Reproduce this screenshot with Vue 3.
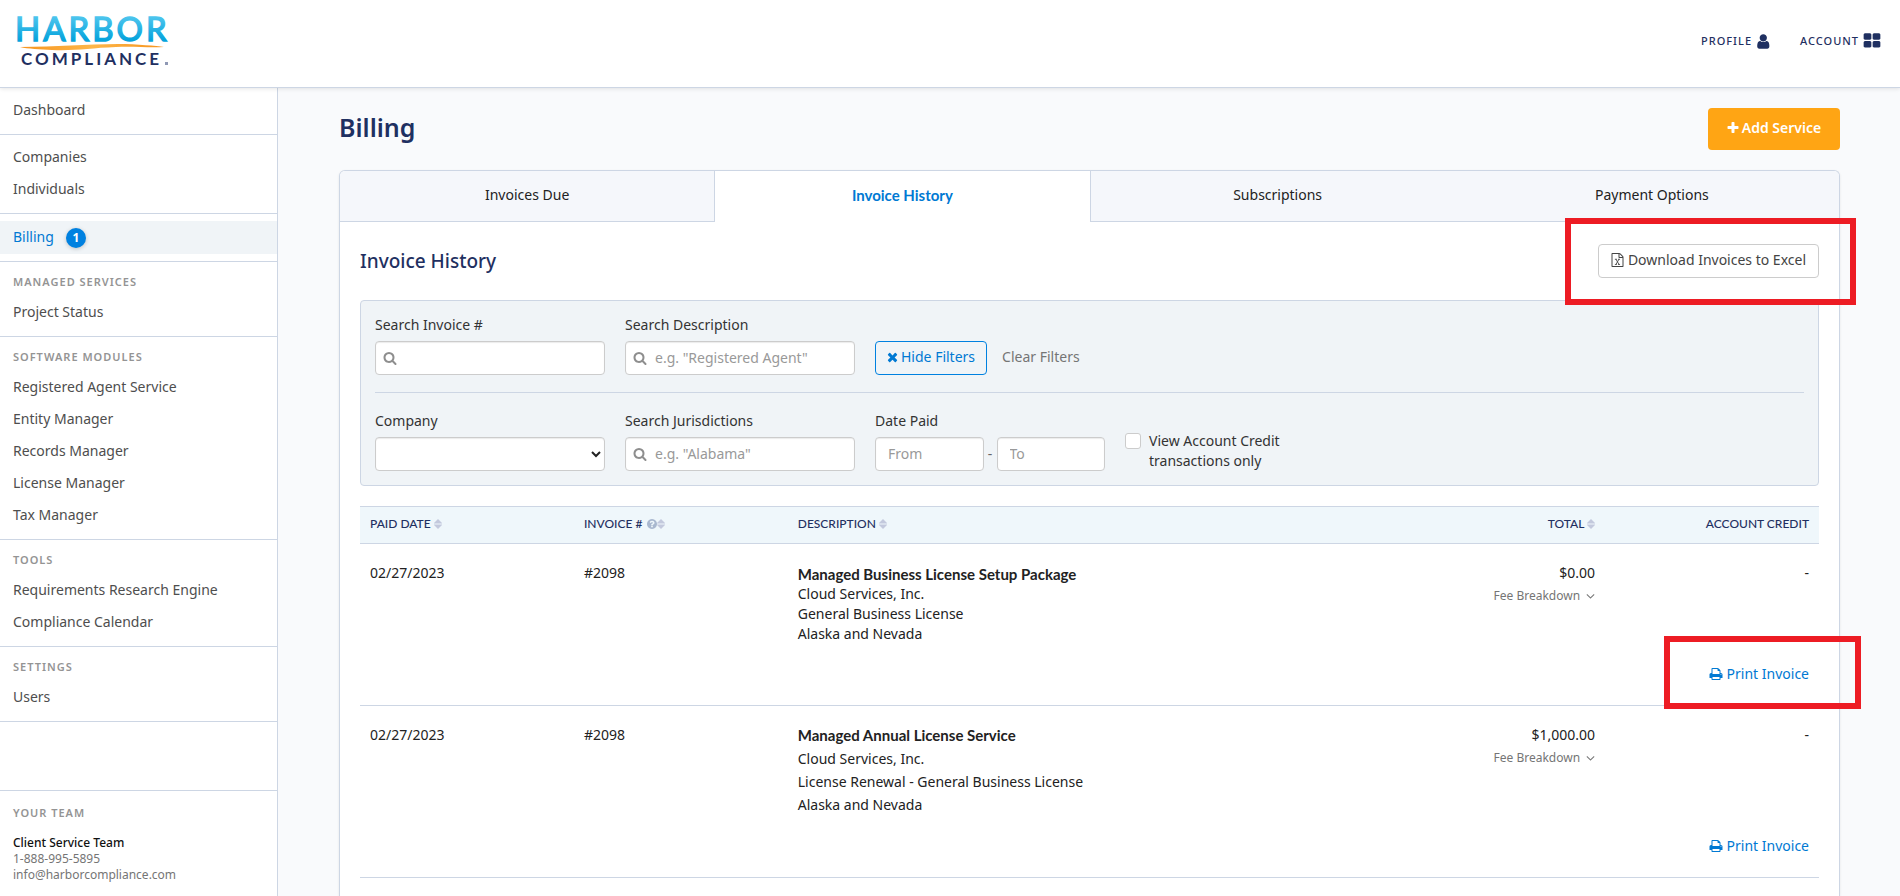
<script setup>
import { ref } from 'vue'

const icons = {
  user: 'M1536 1399q0 109-62.5 187t-150.5 78h-854q-88 0-150.5-78t-62.5-187q0-85 8.5-160.5t31.5-152 58.5-131 94-89 134.5-34.5q131 128 313 128t313-128q76 0 134.5 34.5t94 89 58.5 131 31.5 152 8.5 160.5zm-256-887q0 159-112.5 271.5t-271.5 112.5-271.5-112.5-112.5-271.5 112.5-271.5 271.5-112.5 271.5 112.5 112.5 271.5z',
  grid: 'M832 1024v384q0 52-38 90t-90 38h-512q-52 0-90-38t-38-90v-384q0-52 38-90t90-38h512q52 0 90 38t38 90zm0-768v384q0 52-38 90t-90 38h-512q-52 0-90-38t-38-90v-384q0-52 38-90t90-38h512q52 0 90 38t38 90zm896 768v384q0 52-38 90t-90 38h-512q-52 0-90-38t-38-90v-384q0-52 38-90t90-38h512q52 0 90 38t38 90zm0-768v384q0 52-38 90t-90 38h-512q-52 0-90-38t-38-90v-384q0-52 38-90t90-38h512q52 0 90 38t38 90z',
  plus: 'M1600 736v192q0 40-28 68t-68 28h-416v416q0 40-28 68t-68 28h-192q-40 0-68-28t-28-68v-416h-416q-40 0-68-28t-28-68v-192q0-40 28-68t68-28h416v-416q0-40 28-68t68-28h192q40 0 68 28t28 68v416h416q40 0 68 28t28 68z',
  search: 'M1216 832q0-185-131.5-316.5t-316.5-131.5-316.5 131.5-131.5 316.5 131.5 316.5 316.5 131.5 316.5-131.5 131.5-316.5zm512 832q0 52-38 90t-90 38q-54 0-90-38l-343-342q-179 124-399 124-143 0-273.5-55.5t-225-150-150-225-55.5-273.5 55.5-273.5 150-225 225-150 273.5-55.5 273.5 55.5 225 150 150 225 55.5 273.5q0 220-124 399l343 343q37 37 37 90z',
  times: 'M1490 1322q0 40-28 68l-136 136q-28 28-68 28t-68-28l-294-294-294 294q-28 28-68 28t-68-28l-136-136q-28-28-28-68t28-68l294-294-294-294q-28-28-28-68t28-68l136-136q28-28 68-28t68 28l294 294 294-294q28-28 68-28t68 28l136 136q28 28 28 68t-28 68l-294 294 294 294q28 28 28 68z',
  question: 'M1024 1376v-192q0-14-9-23t-23-9h-192q-14 0-23 9t-9 23v192q0 14 9 23t23 9h192q14 0 23-9t9-23zm256-672q0-88-55.5-163t-138.5-116-170-41q-243 0-371 213-15 24 8 42l132 100q7 6 19 6 16 0 25-12 53-68 86-92 34-24 86-24 48 0 85.5 26t37.5 59q0 38-20 61t-68 45q-63 28-115.5 86.5t-52.5 125.5v36q0 14 9 23t23 9h192q14 0 23-9t9-23q0-19 21.5-49.5t54.5-49.5q32-18 49-28.5t46-35 44.5-48 28-60.5 12.5-81zm384 192q0 209-103 385.5t-279.5 279.5-385.5 103-385.5-103-279.5-279.5-103-385.5 103-385.5 279.5-279.5 385.5-103 385.5 103 279.5 279.5 103 385.5z',
  print: 'M448 1536h896v-256h-896v256zm0-640h896v-384h-160q-40 0-68-28t-28-68v-160h-640v640zm1152 64q0-26-19-45t-45-19-45 19-19 45 19 45 45 19 45-19 19-45zm128 0v416q0 13-9.5 22.5t-22.5 9.5h-224v160q0 40-28 68t-68 28h-960q-40 0-68-28t-28-68v-160h-224q-13 0-22.5-9.5t-9.5-22.5v-416q0-79 56.5-135.5t135.5-56.5h64v-544q0-40 28-68t68-28h672q40 0 88 20t76 48l152 152q28 28 48 76t20 88v256h64q79 0 135.5 56.5t56.5 135.5z',
  file: 'M1596 380q28 28 48 76t20 88v1152q0 40-28 68t-68 28h-1344q-40 0-68-28t-28-68v-1600q0-40 28-68t68-28h896q40 0 88 20t76 48zm-444-244v376h376q-10-29-22-41l-313-313q-12-12-41-22zm384 1528v-1024h-416q-40 0-68-28t-28-68v-416h-768v1536h1280z',
  down: 'M1395 736q0 13-10 23l-466 466q-10 10-23 10t-23-10l-466-466q-10-10-10-23t10-23l50-50q10-10 23-10t23 10l393 393 393-393q10-10 23-10t23 10l50 50q10 10 10 23z',
  sort: 'M4 0L8 4V4.6H0V4ZM0 5.4H8V6L4 10L0 6Z'
}

const groups = [
  { items: ['Dashboard'] },
  { items: ['Companies', 'Individuals'] },
  { items: ['Billing'] },
  { title: 'Managed Services', items: ['Project Status'] },
  {
    title: 'Software Modules',
    items: ['Registered Agent Service', 'Entity Manager', 'Records Manager', 'License Manager', 'Tax Manager']
  },
  { title: 'Tools', items: ['Requirements Research Engine', 'Compliance Calendar'] },
  { title: 'Settings', items: ['Users'] }
]

const tabs = ['Invoices Due', 'Invoice History', 'Subscriptions', 'Payment Options']
const activeTab = ref('Invoice History')

const invoices = [
  {
    date: '02/27/2023',
    number: '#2098',
    title: 'Managed Business License Setup Package',
    lines: ['Cloud Services, Inc.', 'General Business License', 'Alaska and Nevada'],
    total: '$0.00',
    credit: '-',
    compact: true,
    marked: true
  },
  {
    date: '02/27/2023',
    number: '#2098',
    title: 'Managed Annual License Service',
    lines: ['Cloud Services, Inc.', 'License Renewal - General Business License', 'Alaska and Nevada'],
    total: '$1,000.00',
    credit: '-',
    compact: false,
    marked: false
  }
]
</script>

<template>
  <div class="page">
    <header class="topbar">
      <a href="#" class="logo" aria-label="Harbor Compliance">
        <svg width="170" height="66" viewBox="0 0 170 66">
          <defs>
            <linearGradient id="sky" x1="0" y1="0" x2="0" y2="1">
              <stop offset="0.2" stop-color="#4fc6ee" />
              <stop offset="0.8" stop-color="#06a3dc" />
            </linearGradient>
            <linearGradient id="sun" x1="0" y1="0" x2="1" y2="0">
              <stop offset="0" stop-color="#f7941d" />
              <stop offset="0.5" stop-color="#fdb64a" />
              <stop offset="1" stop-color="#f7941d" />
            </linearGradient>
          </defs>
          <text class="logo-top" x="5" y="33" fill="url(#sky)" stroke="url(#sky)">HARBOR</text>
          <path d="M10 39C46 39 76 36 108 36C128 36 146 38 154 39C138 40 124 38 106 39C80 40 66 43 42 42C30 41 18 41 10 39Z" fill="url(#sun)" />
          <text class="logo-bottom" x="11" y="57">COMPLIANCE</text>
          <rect x="155" y="54" width="3" height="3" fill="#8f98b4" />
        </svg>
      </a>
      <nav class="topnav">
        <a href="#">Profile
          <svg width="17" height="17" viewBox="128 0 1792 1792"><path :d="icons.user" /></svg>
        </a>
        <a href="#">Account
          <svg width="18" height="18" viewBox="0 0 1792 1792"><path :d="icons.grid" /></svg>
        </a>
      </nav>
    </header>

    <div class="body">
      <aside class="sidebar">
        <nav>
          <section v-for="(group, i) in groups" :key="i" class="group">
            <h2 v-if="group.title" class="caption">{{ group.title }}</h2>
            <a v-for="item in group.items" :key="item" href="#" class="item" :class="{ active: item === 'Billing' }">
              {{ item }}<span v-if="item === 'Billing'" class="badge">1</span>
            </a>
          </section>
        </nav>
        <section class="team">
          <h2 class="caption">Your Team</h2>
          <strong>Client Service Team</strong>
          <span>1-888-995-5895</span>
          <a href="#">info@harborcompliance.com</a>
        </section>
      </aside>

      <main class="main">
        <div class="title-row">
          <h1>Billing</h1>
          <button type="button" class="add">
            <svg width="12" height="14" viewBox="128 0 1536 1792"><path :d="icons.plus" /></svg>
            Add Service
          </button>
        </div>

        <div class="card">
          <div class="tabs" role="tablist">
            <button
              v-for="tab in tabs"
              :key="tab"
              type="button"
              role="tab"
              class="tab"
              :class="{ selected: tab === activeTab }"
              :aria-selected="tab === activeTab"
              @click="activeTab = tab"
            >{{ tab }}</button>
          </div>

          <div class="panel">
            <div class="panel-head">
              <h2>Invoice History</h2>
              <div class="anchor">
                <button type="button" class="button">
                  <svg width="13" height="14" viewBox="64 0 1664 1792">
                    <path :d="icons.file" />
                    <path class="excel" d="M560 800h260M960 800h260M560 1460h260M960 1460h260M700 800L1080 1460M1080 800L700 1460" />
                  </svg>
                  Download Invoices to Excel
                </button>
                <span class="marker marker-download"></span>
              </div>
            </div>

            <form class="filters" @submit.prevent>
              <div class="filter-row">
                <div class="field">
                  <label for="invoice">Search Invoice #</label>
                  <div class="search">
                    <svg width="14" height="14" viewBox="0 0 1792 1792"><path :d="icons.search" /></svg>
                    <input id="invoice" type="text" />
                  </div>
                </div>
                <div class="field">
                  <label for="description">Search Description</label>
                  <div class="search">
                    <svg width="14" height="14" viewBox="0 0 1792 1792"><path :d="icons.search" /></svg>
                    <input id="description" type="text" placeholder='e.g. "Registered Agent"' />
                  </div>
                </div>
                <div class="actions">
                  <button type="button" class="button hide">
                    <svg width="11" height="14" viewBox="192 0 1408 1792"><path :d="icons.times" /></svg>
                    Hide Filters
                  </button>
                  <button type="button" class="clear">Clear Filters</button>
                </div>
              </div>
              <div class="filter-row second">
                <div class="field">
                  <label for="company">Company</label>
                  <select id="company"><option></option></select>
                </div>
                <div class="field">
                  <label for="jurisdictions">Search Jurisdictions</label>
                  <div class="search">
                    <svg width="14" height="14" viewBox="0 0 1792 1792"><path :d="icons.search" /></svg>
                    <input id="jurisdictions" type="text" placeholder='e.g. "Alabama"' />
                  </div>
                </div>
                <div class="field">
                  <label for="from">Date Paid</label>
                  <div class="dates">
                    <input id="from" type="text" placeholder="From" />
                    <span>-</span>
                    <input type="text" placeholder="To" aria-label="Date paid to" />
                  </div>
                </div>
                <label class="check">
                  <input type="checkbox" />
                  <span>View Account Credit transactions only</span>
                </label>
              </div>
            </form>

            <table>
              <colgroup>
                <col class="narrow" />
                <col class="narrow" />
                <col />
                <col class="narrow" />
                <col class="narrow" />
              </colgroup>
              <thead>
                <tr>
                  <th>Paid Date <svg class="sort" width="8" height="10" viewBox="0 0 8 10"><path :d="icons.sort" /></svg></th>
                  <th>Invoice #
                    <svg class="help" width="10" height="10" viewBox="128 128 1536 1536"><path :d="icons.question" /></svg>
                    <svg class="sort" width="8" height="10" viewBox="0 0 8 10"><path :d="icons.sort" /></svg></th>
                  <th>Description <svg class="sort" width="8" height="10" viewBox="0 0 8 10"><path :d="icons.sort" /></svg></th>
                  <th class="right">Total <svg class="sort" width="8" height="10" viewBox="0 0 8 10"><path :d="icons.sort" /></svg></th>
                  <th class="right">Account Credit</th>
                </tr>
              </thead>
              <tbody v-for="(invoice, i) in invoices" :key="i">
                <tr>
                  <td>{{ invoice.date }}</td>
                  <td>{{ invoice.number }}</td>
                  <td class="details" :class="{ compact: invoice.compact }">
                    <strong>{{ invoice.title }}</strong>
                    <div v-for="line in invoice.lines" :key="line">{{ line }}</div>
                  </td>
                  <td class="right">
                    {{ invoice.total }}
                    <button type="button" class="fees">
                      Fee Breakdown
                      <svg width="9" height="14" viewBox="320 0 1152 1792"><path :d="icons.down" /></svg>
                    </button>
                  </td>
                  <td class="right">{{ invoice.credit }}</td>
                </tr>
                <tr class="footer-row">
                  <td colspan="5">
                    <div class="anchor">
                      <a href="#" class="print">
                        <svg width="14" height="14" viewBox="0 0 1792 1792"><path :d="icons.print" /></svg>
                        Print Invoice
                      </a>
                      <span v-if="invoice.marked" class="marker marker-print"></span>
                    </div>
                  </td>
                </tr>
              </tbody>
            </table>
          </div>
        </div>
      </main>
    </div>
  </div>
</template>

<style>
body {
  margin: 0;
  background: #f9fafc;
}
</style>

<style scoped>
* {
  box-sizing: border-box;
}
.page {
  min-height: 100vh;
  display: flex;
  flex-direction: column;
  font: 14px/20px "Noto Sans", "Open Sans", sans-serif;
  color: #222;
}
h1,
h2 {
  margin: 0;
}
a {
  text-decoration: none;
}
svg {
  fill: currentColor;
  flex: none;
}
button,
input,
select {
  font: inherit;
  color: inherit;
}
button {
  cursor: pointer;
}

.topbar {
  position: relative;
  height: 88px;
  flex: none;
  display: flex;
  justify-content: space-between;
  align-items: flex-start;
  padding: 8px 19px 0 10px;
  background: #fff;
  border-bottom: 1px solid #cdd6e4;
  box-shadow: 0 1px 4px rgba(0, 0, 0, 0.1);
}
.logo-top {
  font: 400 33px "Lato", sans-serif;
  letter-spacing: 3px;
  stroke-width: 1.4;
}
.logo-bottom {
  font: 700 17px "Lato", sans-serif;
  letter-spacing: 3px;
  fill: #1f3061;
}
.topnav {
  display: flex;
  gap: 27px;
  padding-top: 23px;
}
.topnav a {
  display: flex;
  align-items: center;
  gap: 4px;
  color: #1f3061;
  font-size: 11px;
  font-weight: 500;
  letter-spacing: 1px;
  text-transform: uppercase;
}

.body {
  flex: 1;
  display: flex;
}
.sidebar {
  flex: none;
  width: 278px;
  display: flex;
  flex-direction: column;
  justify-content: space-between;
  background: #fff;
  border-right: 1px solid #cdd6e4;
}
.group {
  padding: 7px 0;
  border-bottom: 1px solid #cdd6e4;
}
.caption {
  padding: 0 0 2px 13px;
  font-size: 11px;
  line-height: 26px;
  font-weight: 600;
  letter-spacing: 1px;
  text-transform: uppercase;
  color: #949494;
}
.item {
  display: flex;
  align-items: center;
  height: 32px;
  padding: 0 0 2px 13px;
  color: #4e4e4e;
}
.item.active {
  height: 33px;
  background: #f0f4f7;
  color: #0079d3;
}
.badge {
  width: 20px;
  height: 20px;
  margin: 2px 0 0 12px;
  border-radius: 50%;
  background: #0081e0;
  box-shadow: 0 1px 4px rgba(0, 0, 0, 0.2);
  color: #fff;
  font-size: 12px;
  font-weight: 700;
  text-align: center;
}
.team {
  height: 106px;
  padding: 9px 0 0;
  border-top: 1px solid #cdd6e4;
  font-size: 12px;
  line-height: 16px;
  color: #757575;
}
.team strong,
.team span,
.team a {
  display: block;
  padding-left: 13px;
  color: inherit;
}
.team strong {
  margin-top: 7px;
  font-weight: 500;
  color: #111;
}

.main {
  flex: 1;
  min-width: 0;
  display: flex;
  flex-direction: column;
  padding: 20px 60px 0 61px;
}
.title-row {
  display: flex;
  justify-content: space-between;
  align-items: flex-start;
  margin-bottom: 20px;
}
h1 {
  font-size: 25px;
  line-height: 38px;
  font-weight: 600;
  color: #1f3061;
}
.add {
  display: flex;
  align-items: center;
  justify-content: center;
  gap: 3px;
  width: 132px;
  height: 42px;
  padding: 0 0 2px;
  border: 0;
  border-radius: 4px;
  background: #ffa514;
  color: #fff;
  font-weight: 600;
}
.card {
  flex: 1;
  background: #fff;
  border: 1px solid #cdd6e4;
  border-bottom: 0;
  border-radius: 6px 6px 0 0;
  box-shadow: 0 1px 3px rgba(0, 0, 0, 0.08);
}
.tabs {
  display: flex;
}
.tab {
  flex: 1;
  height: 51px;
  padding: 0 0 2px;
  border: 0;
  border-bottom: 1px solid #cdd6e4;
  background: #f5f7fb;
}
.tab:first-child {
  border-top-left-radius: 5px;
}
.tab:last-child {
  border-top-right-radius: 5px;
}
.tab.selected {
  padding-bottom: 4px;
  border-bottom: 0;
  border-left: 1px solid #cdd6e4;
  border-right: 1px solid #cdd6e4;
  background: #fff;
  color: #0079d3;
  font-family: "Lato", sans-serif;
  font-size: 15px;
  font-weight: 700;
}
.panel {
  padding: 22px 20px 0;
}
.panel-head {
  display: flex;
  justify-content: space-between;
  align-items: center;
  margin-bottom: 22px;
}
h2 {
  font-size: 19px;
  line-height: 28px;
  font-weight: 500;
  color: #1f3061;
}
.anchor {
  position: relative;
}
.button {
  display: flex;
  align-items: center;
  gap: 4px;
  height: 34px;
  padding: 0 12px 2px;
  border: 1px solid #ccc;
  border-radius: 4px;
  background: #fff;
  color: #444;
}
.excel {
  fill: none;
  stroke: currentColor;
  stroke-width: 110;
}
.marker {
  position: absolute;
  border: 6px solid #ed1c24;
  pointer-events: none;
}
.marker-download {
  top: -26px;
  right: -37px;
  width: 291px;
  height: 87px;
}
.marker-print {
  top: -28px;
  right: -52px;
  width: 197px;
  height: 73px;
}

.filters {
  padding: 14px;
  background: #f0f4f7;
  border: 1px solid #cdd6e4;
  border-radius: 4px;
}
.filter-row {
  display: flex;
  align-items: flex-end;
  gap: 20px;
}
.second {
  margin-top: 17px;
  padding-top: 18px;
  border-top: 1px solid #cdd6e4;
}
.field {
  width: 230px;
}
.field label {
  display: block;
  margin-bottom: 6px;
  color: #333;
}
input[type='text'],
select {
  display: block;
  width: 100%;
  height: 34px;
  padding: 0 12px 2px;
  border: 1px solid #ccc;
  border-radius: 4px;
  background: #fff;
  box-shadow: inset 0 1px 1px rgba(0, 0, 0, 0.08);
}
select {
  padding: 0 4px;
}
input::placeholder {
  color: #999;
}
.search {
  position: relative;
}
.search svg {
  position: absolute;
  top: 10px;
  left: 8px;
  color: #8e8e8e;
}
.search input[type='text'] {
  padding-left: 29px;
}
.actions {
  display: flex;
  align-items: center;
  gap: 15px;
}
.hide {
  gap: 3px;
  padding: 0 11px 2px;
  background: none;
  border-color: #0081e0;
  color: #0079d3;
}
.clear,
.fees {
  padding: 0 0 2px;
  border: 0;
  background: none;
  color: #757575;
}
.dates {
  display: flex;
  align-items: center;
}
.dates input {
  flex: 1;
  min-width: 0;
}
.dates span {
  width: 13px;
  text-align: center;
  color: #666;
}
.check {
  display: flex;
  gap: 8px;
  width: 190px;
  color: #333;
}
.check input {
  appearance: none;
  flex: none;
  width: 16px;
  height: 16px;
  margin: 2px 0 0;
  border: 1px solid #ccc;
  border-radius: 3px;
  background: #fff;
}

table {
  width: 100%;
  margin-top: 20px;
  border-collapse: separate;
  border-spacing: 0;
  table-layout: fixed;
}
.narrow {
  width: 14.66%;
}
th {
  height: 38px;
  padding: 0 10px 2px;
  border: solid #cdd6e4;
  border-width: 1px 0;
  background: #eff7fb;
  color: #1f3061;
  font-family: "Lato", sans-serif;
  font-size: 12px;
  line-height: 16px;
  font-weight: 500;
  text-align: left;
  text-transform: uppercase;
}
th svg {
  vertical-align: -1px;
}
.sort {
  color: #c3c9dd;
}
.help {
  margin-left: 2px;
  color: #a9b8cf;
}
td {
  padding: 19px 10px 0;
  vertical-align: top;
}
.right {
  text-align: right;
}
.details strong {
  display: block;
  font-family: "Lato", sans-serif;
  font-size: 15px;
  font-weight: 700;
}
.details {
  padding-top: 18px;
  line-height: 23px;
}
.details.compact {
  padding-top: 20px;
  line-height: 20px;
}
.fees {
  display: flex;
  align-items: center;
  gap: 6px;
  margin: 3px 0 0 auto;
  font-size: 12px;
}
.footer-row td {
  padding: 20px 10px 21px;
  border-bottom: 1px solid #cdd6e4;
}
.footer-row .anchor {
  width: fit-content;
  margin-left: auto;
}
.print {
  display: flex;
  align-items: center;
  gap: 4px;
  color: #0079d3;
}
</style>
